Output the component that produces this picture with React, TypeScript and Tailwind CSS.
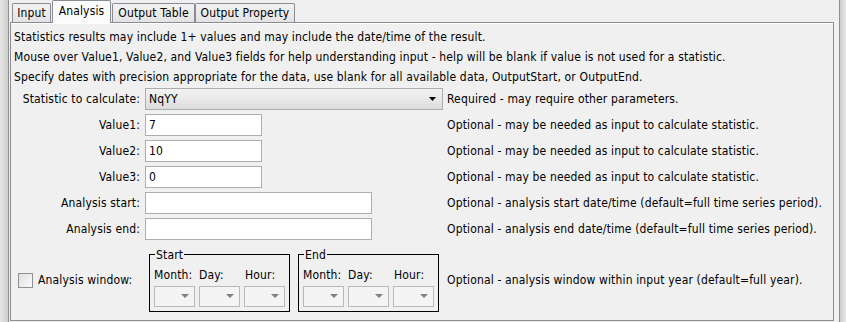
import React from 'react';

const tabs = ['Input', 'Analysis', 'Output Table', 'Output Property'];

function Arrow({ gray }: { gray?: boolean }) {
  return (
    <svg width={gray ? 8 : 7} height="4" viewBox={gray ? '0 0 8 4' : '0 0 7 4'}>
      <polygon points={gray ? '0,0 8,0 4,4' : '0,0 7,0 3.5,4'} fill={gray ? '#808080' : '#000'} />
    </svg>
  );
}

function TextField({ value, wide }: { value?: string; wide?: boolean }) {
  return (
    <div className={`flex h-[22px] items-center border border-[#abadb3] bg-white pl-[3px] ${wide ? 'w-[227px]' : 'w-[117px]'}`}>
      {value}
    </div>
  );
}

function SmallCombo() {
  return (
    <div className="flex h-[21px] w-[41px] items-center justify-end border border-[#b9b9b9] bg-[#f4f4f4] pr-[5px]">
      <Arrow gray />
    </div>
  );
}

function WindowBox({ title }: { title: string }) {
  return (
    <fieldset className="w-[141px] border border-black px-[4px] pb-[4px]">
      <legend className="ml-[1px] px-px leading-[12px]">{title}</legend>
      <div className="mt-[4px] grid grid-cols-[41px_41px_41px] gap-x-[4px]">
        <div className="h-[20px] leading-[20px] whitespace-nowrap">Month:</div>
        <div className="h-[20px] leading-[20px]">Day:</div>
        <div className="h-[20px] pl-px leading-[20px]">Hour:</div>
        <div className="mt-px"><SmallCombo /></div>
        <div className="mt-px"><SmallCombo /></div>
        <div className="mt-px"><SmallCombo /></div>
      </div>
    </fieldset>
  );
}

export default function App() {
  const label = 'flex items-center justify-end pr-[5px] whitespace-nowrap';
  const help = 'flex items-center whitespace-nowrap';
  return (
    <div className="flex h-[322px] w-[846px] overflow-hidden bg-[#f0f0f0] font-['DejaVu_Sans_Condensed','Liberation_Sans',sans-serif] text-[12px] tracking-[0.15px] text-black">
      <div className="w-[8px] bg-gradient-to-r from-[#e6e6e6] to-[#cdcdcd]" />
      <div className="w-px bg-[#8e8e8e]" />
      <div className="w-[830px] pl-px pr-[5px]">
        {/* tabs */}
        <div className="flex h-[22px] items-end pl-[2px]">
          {tabs.map((t, i) =>
            i === 1 ? (
              <div key={t} className="relative z-10 -mb-px ml-px flex h-[23px] w-[59px] items-start justify-center rounded-t-[2px] border border-b-0 border-[#898c95] bg-[#fbfbfb] pt-[3px] leading-[15px]">
                {t}
              </div>
            ) : (
              <div
                key={t}
                className={`flex h-[19px] items-center justify-center rounded-t-[2px] border border-b-0 border-[#898c95] bg-gradient-to-b from-[#f2f2f2] to-[#e3e3e3] ${i === 0 ? 'w-[39px]' : i === 2 ? 'ml-px w-[83px]' : 'w-[100px]'}`}
              >
                {t}
              </div>
            )
          )}
        </div>
        {/* panel */}
        <div className="h-[299px] w-[824px] border border-[#898c95]">
          <div className="h-full border-t border-white pl-[3px] pt-[3px]">
            <div className="leading-[20px]">
              <div>Statistics results may include 1+ values and may include the date/time of the result.</div>
              <div>Mouse over Value1, Value2, and Value3 fields for help understanding input - help will be blank if value is not used for a statistic.</div>
              <div>Specify dates with precision appropriate for the data, use blank for all available data, OutputStart, or OutputEnd.</div>
            </div>
            <div className="mt-px grid grid-cols-[131px_302px_1fr] grid-rows-[22px_22px_22px_22px_22px_22px_72px] gap-y-[4px]">
              <div className={label}>Statistic to calculate:</div>
              <div className="flex h-[22px] w-[298px] items-center justify-between border border-[#acacac] bg-gradient-to-b from-[#f3f3f3] via-[#e9e9e9] to-[#dcdcdc] pl-[3px] pr-[6px]">
                <span>NqYY</span>
                <Arrow />
              </div>
              <div className={help}>Required - may require other parameters.</div>

              <div className={label}>Value1:</div>
              <TextField value="7" />
              <div className={help}>Optional - may be needed as input to calculate statistic.</div>

              <div className={label}>Value2:</div>
              <TextField value="10" />
              <div className={help}>Optional - may be needed as input to calculate statistic.</div>

              <div className={label}>Value3:</div>
              <TextField value="0" />
              <div className={help}>Optional - may be needed as input to calculate statistic.</div>

              <div className={label}>Analysis start:</div>
              <TextField wide />
              <div className={help}>Optional - analysis start date/time (default=full time series period).</div>

              <div className={label}>Analysis end:</div>
              <TextField wide />
              <div className={help}>Optional - analysis end date/time (default=full time series period).</div>

              <div className="flex items-center gap-[5px] pl-[4px] whitespace-nowrap">
                <div className="h-[15px] w-[15px] border border-[#8f8f8f] bg-gradient-to-br from-[#e0e0e0] to-[#fafafa]" />
                <span>Analysis window:</span>
              </div>
              <div className="flex items-center gap-[8px] pl-[4px]">
                <WindowBox title="Start" />
                <WindowBox title="End" />
              </div>
              <div className={help}>Optional - analysis window within input year (default=full year).</div>
            </div>
          </div>
        </div>
      </div>
      <div className="w-px bg-[#8e8e8e]" />
      <div className="flex-1 bg-gradient-to-r from-[#cdcdcd] to-[#e6e6e6]" />
    </div>
  );
}
